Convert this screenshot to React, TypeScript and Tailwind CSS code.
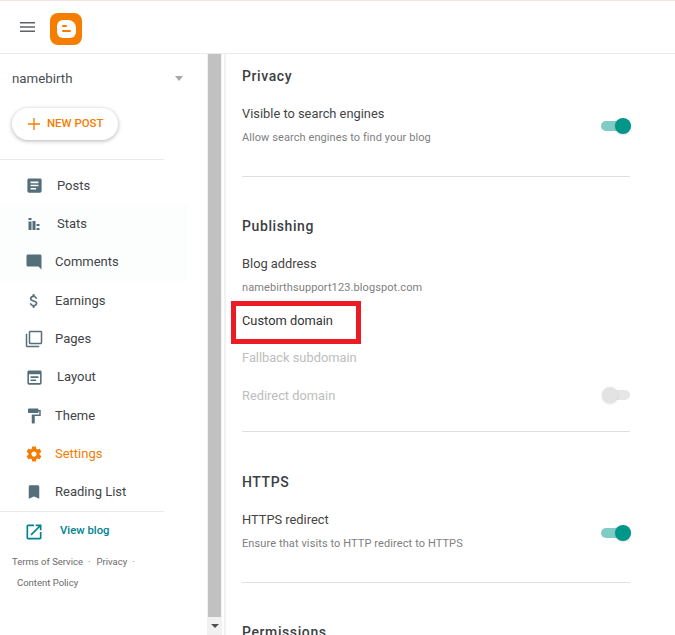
import React from 'react';

const NAV = [
  { label: 'Posts', d: 'M19 3H5c-1.1 0-2 .9-2 2v14c0 1.1.9 2 2 2h14c1.1 0 2-.9 2-2V5c0-1.1-.9-2-2-2zm-5 14H7v-2h7v2zm3-4H7v-2h10v2zm0-4H7V7h10v2z', text: 'pl-[57px]', box: 'w-[19px] h-[19px]' },
  { label: 'Stats', d: 'M3.75 3h4.5v3h-4.5zM3.75 8.25h4.5V21h-4.5zM9.75 7.5h4.5V21h-4.5zM15.75 12h4.5v3h-4.5zM15.75 18h4.5v3h-4.5z', text: 'pl-[57px]', box: 'w-[16px] h-[16px]' },
  { label: 'Comments', d: 'M21.99 4c0-1.1-.89-2-1.99-2H4c-1.1 0-2 .9-2 2v12c0 1.1.9 2 2 2h14l4 4-.01-18z', text: 'pl-[55px]', box: 'w-[18px] h-[18px]' },
  { label: 'Earnings', d: 'M11.8 10.9c-2.27-.59-3-1.2-3-2.15 0-1.09 1.01-1.85 2.7-1.85 1.78 0 2.44.85 2.5 2.1h2.21c-.07-1.72-1.12-3.3-3.21-3.81V3h-3v2.16c-1.94.42-3.5 1.68-3.5 3.61 0 2.31 1.91 3.46 4.7 4.13 2.5.6 3 1.48 3 2.41 0 .69-.49 1.79-2.7 1.79-2.06 0-2.87-.92-2.98-2.1h-2.2c.12 2.19 1.76 3.42 3.68 3.83V21h3v-2.15c1.95-.37 3.5-1.5 3.5-3.55 0-2.84-2.43-3.81-4.7-4.4z', text: 'pl-[55px]', box: 'w-[18px] h-[18px]' },
  { label: 'Pages', d: 'M3 5H1v16c0 1.1.9 2 2 2h16v-2H3V5zm18-4H7c-1.1 0-2 .9-2 2v14c0 1.1.9 2 2 2h14c1.1 0 2-.9 2-2V3c0-1.1-.9-2-2-2zm0 16H7V3h14v14z', text: 'pl-[55px]', box: 'w-[18px] h-[18px]' },
  { label: 'Layout', d: 'M19 3H5c-1.1 0-2 .9-2 2v14c0 1.1.9 2 2 2h14c1.1 0 2-.9 2-2V5c0-1.1-.9-2-2-2zm0 16H5V8h14v11zM7 10.5h10v2H7zm0 4h7v2H7z', text: 'pl-[57px]', box: 'w-[19px] h-[19px]' },
  { label: 'Theme', d: 'M18 4V3c0-.55-.45-1-1-1H5c-.55 0-1 .45-1 1v4c0 .55.45 1 1 1h12c.55 0 1-.45 1-1V6h1v4H9v11c0 .55.45 1 1 1h2c.55 0 1-.45 1-1v-9h8V4h-3z', text: 'pl-[55px]', box: 'w-[18px] h-[18px]' },
  { label: 'Settings', d: 'M19.43 12.98c.04-.32.07-.64.07-.98s-.03-.66-.07-.98l2.11-1.65c.19-.15.24-.42.12-.64l-2-3.46c-.12-.22-.39-.3-.61-.22l-2.49 1c-.52-.4-1.08-.73-1.69-.98l-.38-2.65C14.46 2.18 14.25 2 14 2h-4c-.25 0-.46.18-.49.42l-.38 2.65c-.61.25-1.17.59-1.69.98l-2.49-1c-.23-.09-.49 0-.61.22l-2 3.46c-.13.22-.07.49.12.64l2.11 1.65c-.04.32-.07.65-.07.98s.03.66.07.98l-2.11 1.65c-.19.15-.24.42-.12.64l2 3.46c.12.22.39.3.61.22l2.49-1c.52.4 1.08.73 1.69.98l.38 2.65c.03.24.24.42.49.42h4c.25 0 .46-.18.49-.42l.38-2.65c.61-.25 1.17-.59 1.69-.98l2.49 1c.23.09.49 0 .61-.22l2-3.46c.12-.22.07-.49-.12-.64l-2.11-1.65zM12 15.5c-1.93 0-3.5-1.57-3.5-3.5s1.57-3.5 3.5-3.5 3.5 1.57 3.5 3.5-1.57 3.5-3.5 3.5z', text: 'pl-[55px]', box: 'w-[18px] h-[18px]', active: true },
  { label: 'Reading List', d: 'M17 3H7c-1.1 0-1.99.9-1.99 2L5 21l7-3 7 3V5c0-1.1-.9-2-2-2z', text: 'pl-[55px]', box: 'w-[18px] h-[18px]' },
];

const Icon = ({ d, className }: { d: string; className: string }) => (
  <svg viewBox="0 0 24 24" className={className} fill="currentColor">
    <path d={d} />
  </svg>
);

const Toggle = ({ on = true, className = '' }: { on?: boolean; className?: string }) => (
  <div className={`relative h-[20px] shrink-0 flex items-center ${on ? 'w-[30px] mr-[-1px]' : 'w-[28px]'} ${className}`}>
    <div className={`w-full h-[10px] rounded-full ${on ? 'bg-[#80cbc4]' : 'bg-[#e6e6e6]'}`} />
    {on ? (
      <div className="absolute right-0 top-[2px] w-4 h-4 rounded-full bg-[#009688] shadow-sm" />
    ) : (
      <div className="absolute left-0 top-[2px] w-4 h-4 rounded-full bg-[#e3e3e3] shadow-sm" />
    )}
  </div>
);

const Sidebar = () => (
  <aside className="w-[207px] shrink-0 flex flex-col">
    <div className="h-[49px] flex items-center justify-between pl-3 pr-6">
      <span className="text-[13.3px] text-[#4a4f53]">namebirth</span>
      <div className="w-0 h-0 border-x-[4.5px] border-x-transparent border-t-[5px] border-t-[#a8a8a8]" />
    </div>
    <div className="pl-3 pt-[5px]">
      <button className="w-[106px] h-[32px] rounded-full bg-white shadow-[0_1px_4px_rgba(0,0,0,0.3)] flex items-center pl-4 gap-[7px] text-[#f57c00]">
        <svg viewBox="0 0 12 12" className="w-3 h-3" stroke="currentColor" strokeWidth="1.3"><path d="M6 0v12M0 6h12" /></svg>
        <span className="text-[11.4px] font-medium">NEW POST</span>
      </button>
    </div>
    <div className="mt-[19px] w-[164px] h-px bg-[#ebebeb]" />
    <nav className="pt-[6.3px]">
      {NAV.map((item, i) => (
        <div
          key={item.label}
          className={`relative h-[38.35px] flex items-center w-[187px] ${i === 1 || i === 2 ? 'bg-[#fcfefd]' : ''}`}
        >
          <div className="absolute left-[25px] top-0 h-full w-[18px] flex items-center justify-center">
            <Icon d={item.d} className={`shrink-0 ${item.box} ${item.active ? 'text-[#f57c00]' : 'text-[#546e7a]'}`} />
          </div>
          <span className={`${item.text} text-[13px] ${item.active ? 'text-[#f57c00]' : 'text-[#3f4448]'}`}>{item.label}</span>
        </div>
      ))}
    </nav>
    <div className="w-[164px] h-px bg-[#ebebeb]" />
    <div className="h-[39px] flex items-center pl-[24px] text-[#00838f]">
      <Icon d="M19 19H5V5h7V3H5c-1.11 0-2 .9-2 2v14c0 1.1.89 2 2 2h14c1.1 0 2-.9 2-2v-7h-2v7zM14 3v2h3.59l-9.83 9.83 1.41 1.41L19 6.41V10h2V3h-7z" className="w-[20px] h-[20px]" />
      <span className="ml-[16px] text-[11.3px] font-medium">View blog</span>
    </div>
    <div className="pl-3 text-[9.5px] leading-[21px] text-[#6a6a6a]">
      <div className="flex">
        <span>Terms of Service</span>
        <span className="ml-[5px]">·</span>
        <span className="ml-[6px]">Privacy</span>
        <span className="ml-[5px]">·</span>
      </div>
      <div className="pl-[5px]">Content Policy</div>
    </div>
  </aside>
);

const Scrollbar = () => (
  <div className="w-[15px] shrink-0 bg-[#f1f1f1] flex flex-col items-center">
    <div className="w-[13px] h-[563px] bg-[#c1c1c1]" />
    <div className="flex-1 flex items-center justify-center">
      <div className="w-0 h-0 border-x-[4px] border-x-transparent border-t-[4px] border-t-[#505050]" />
    </div>
  </div>
);

const Content = () => (
  <main className="flex-1 min-w-0 border-l-2 border-[#f2f2f2] ml-[2px] pl-[16px] pr-[45px] overflow-hidden">
    <section className="pt-[12px] h-[123px] border-b border-[#dfdfdf]">
      <h2 className="text-[14px] font-medium leading-[20px] tracking-[0.6px] text-[#3c4043]">Privacy</h2>
      <div className="flex items-center justify-between mt-[18px]">
        <div>
          <div className="text-[12.85px] leading-[20px] text-[#444]">Visible to search engines</div>
          <div className="text-[11px] leading-[16px] mt-[6px] tracking-[0.08px] text-[#808080]">Allow search engines to find your blog</div>
        </div>
        <Toggle className="mt-[2px]" />
      </div>
    </section>
    <section className="pt-[39px] h-[255px] border-b border-[#dfdfdf]">
      <h2 className="text-[14px] font-medium leading-[20px] tracking-[0.6px] text-[#3c4043]">Publishing</h2>
      <div className="text-[12.85px] leading-[20px] mt-[18px] text-[#444]">Blog address</div>
      <div className="text-[11px] leading-[16px] mt-[6px] tracking-[0.1px] text-[#808080]">namebirthsupport123.blogspot.com</div>
      <div className="relative text-[12.85px] leading-[20px] mt-[15px] text-[#333]">
        Custom domain
        <div className="absolute left-[-11px] top-[-10px] w-[130px] h-[43px] border-[5px] border-[#ed1c24]" />
      </div>
      <div className="text-[12.85px] leading-[20px] mt-[17px] text-[#bdbdbd]">Fallback subdomain</div>
      <div className="flex items-center justify-between mt-[18px]">
        <div className="text-[12.85px] leading-[20px] text-[#bdbdbd]">Redirect domain</div>
        <Toggle on={false} className="mt-[-2px]" />
      </div>
    </section>
    <section className="pt-[40px] h-[151px] border-b border-[#dfdfdf]">
      <h2 className="text-[14px] font-medium leading-[20px] tracking-[0.6px] text-[#3c4043]">HTTPS</h2>
      <div className="flex items-center justify-between mt-[18px]">
        <div>
          <div className="text-[12.85px] leading-[20px] text-[#444]">HTTPS redirect</div>
          <div className="text-[11px] leading-[16px] mt-[6px] tracking-[0.1px] text-[#808080]">Ensure that visits to HTTP redirect to HTTPS</div>
        </div>
        <Toggle className="mt-[4px]" />
      </div>
    </section>
    <section className="pt-[39px]">
      <h2 className="text-[14px] font-medium leading-[20px] tracking-[0.6px] text-[#3c4043]">Permissions</h2>
    </section>
  </main>
);

const App: React.FC = () => {
  return (
    <div className="h-[635px] w-[675px] overflow-hidden bg-white flex flex-col font-['Roboto',sans-serif]">
      <div className="h-px bg-[#f6e3dc]" />
      <header className="h-[53px] shrink-0 border-b border-[#ebebeb] flex items-center pl-5 pt-[3px] gap-[15px]">
        <svg viewBox="0 0 15 10" className="w-[15px] h-[10px] mb-[3px] text-[#5f6368]" fill="currentColor">
          <path d="M0 0h15v1.4H0zM0 4.3h15v1.4H0zM0 8.6h15V10H0z" />
        </svg>
        <div className="w-8 h-8 rounded-[8px] bg-[#f57d00] flex items-center justify-center">
          <div className="w-[19px] h-[18px] rounded-[6px] rounded-tr-[8px] bg-white flex flex-col justify-center gap-[3px] pl-[5px]">
            <div className="w-[5px] h-[2px] rounded-full bg-[#f57d00]" />
            <div className="w-[9px] h-[2px] rounded-full bg-[#f57d00]" />
          </div>
        </div>
      </header>
      <div className="flex-1 min-h-0 flex">
        <Sidebar />
        <Scrollbar />
        <Content />
      </div>
    </div>
  );
};

export default App;
